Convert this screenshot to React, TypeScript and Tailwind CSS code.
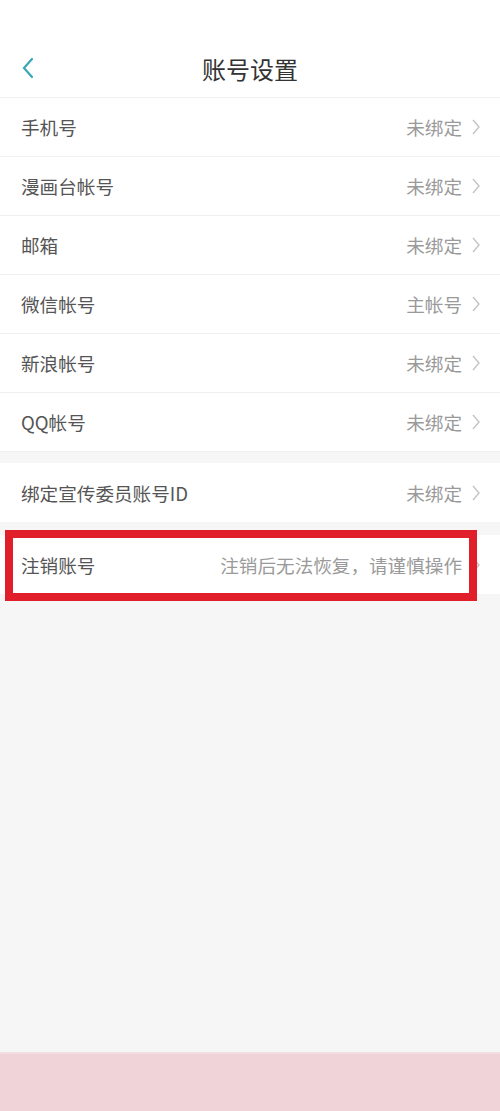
const ROWS_TOP = [
  { label: "手机号", value: "未绑定" },
  { label: "漫画台帐号", value: "未绑定" },
  { label: "邮箱", value: "未绑定" },
  { label: "微信帐号", value: "主帐号" },
  { label: "新浪帐号", value: "未绑定" },
  { label: "QQ帐号", value: "未绑定" },
];

function Chevron() {
  return (
    <svg width="10" height="18" viewBox="0 0 10 18" className="shrink-0">
      <path d="M2 2 L8 9 L2 16" fill="none" stroke="#c4c4c4" strokeWidth="1.4" />
    </svg>
  );
}

function Row({ label, value, last }: { label: string; value: string; last?: boolean }) {
  return (
    <div
      className={
        "h-[59px] bg-white flex items-center pl-[21px] pr-[19px] " +
        (last ? "" : "border-b border-[#f0f0f0]")
      }
    >
      <span className="text-[18.6px] text-[#555555]">{label}</span>
      <span className="ml-auto text-[18.6px] text-[#9a9a9a] mr-[9px]">{value}</span>
      <Chevron />
    </div>
  );
}

export default function App() {
  return (
    <div
      className="h-[1111px] w-[500px] bg-[#f6f6f6] flex flex-col overflow-hidden"
      style={{ fontFamily: '"Noto Sans CJK SC", "Noto Sans", sans-serif' }}
    >
      {/* Header */}
      <div className="bg-white pt-[40px] border-b border-[#f0f0f0]">
        <div className="h-[57px] relative flex items-center justify-center">
          <svg
            width="14"
            height="22"
            viewBox="0 0 14 22"
            className="absolute left-[21px] top-[17px]"
          >
            <path d="M11 2 L3 11 L11 20" fill="none" stroke="#3aa6b6" strokeWidth="2.2" strokeLinecap="round" />
          </svg>
          <span className="text-[24px] text-[#333333]">账号设置</span>
        </div>
      </div>

      {/* Account bindings */}
      <div className="flex flex-col">
        {ROWS_TOP.map((r) => (
          <Row key={r.label} label={r.label} value={r.value} />
        ))}
      </div>

      <div className="mt-[11px]">
        <Row label="绑定宣传委员账号ID" value="未绑定" last />
      </div>

      {/* Delete account */}
      <div className="mt-[13px] relative">
        <Row label="注销账号" value="注销后无法恢复，请谨慎操作" last />
        <div className="absolute left-[5px] right-[23px] -top-[5px] -bottom-[7px] border-[8px] border-[#e01f2b]" />
      </div>

      <div className="flex-1" />
      <div className="h-[59px] bg-[#efd3d8] border-t-2 border-[#f2dde2]" />
    </div>
  );
}
